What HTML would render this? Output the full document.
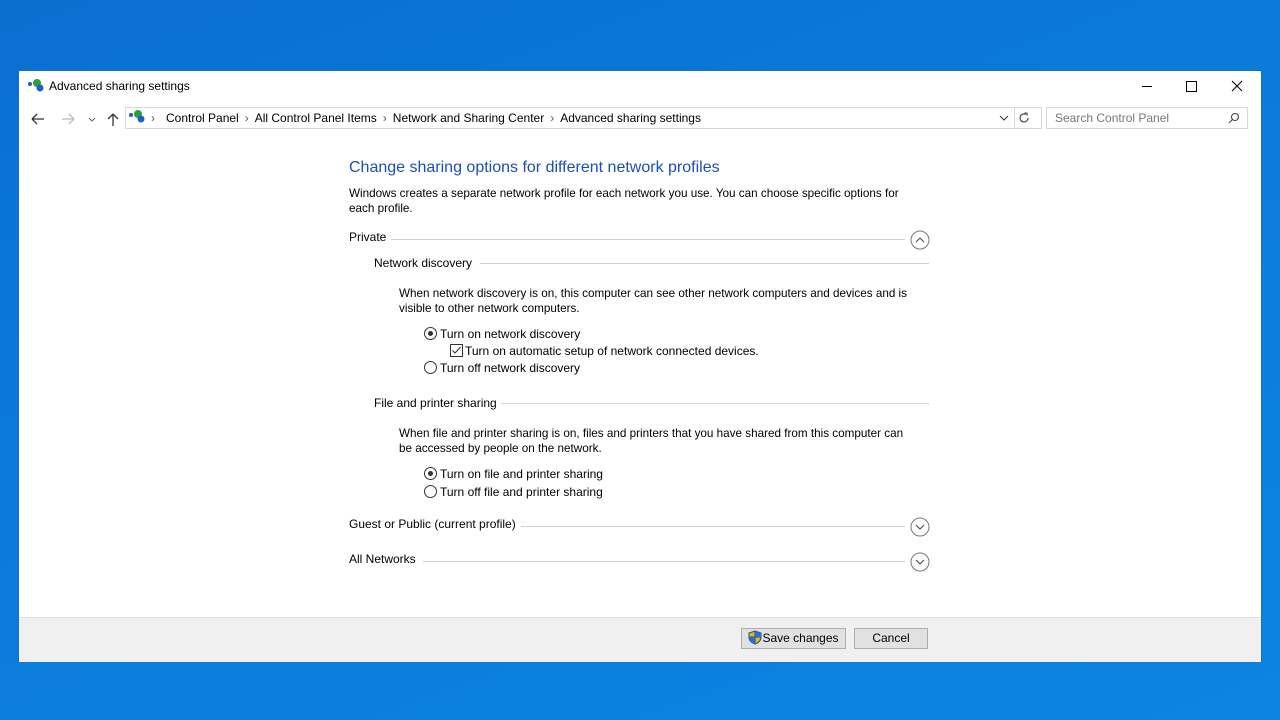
<!DOCTYPE html><html><head><style>
body{margin:0;width:1280px;height:720px;overflow:hidden;background:linear-gradient(160deg,#0a6fd0 0%,#0b7ad9 40%,#0d84e0 100%);font-family:"Liberation Sans",sans-serif;font-size:12px;color:#000;position:relative}
.win{position:absolute;left:18px;top:70px;width:1242px;height:590px;background:#fff;border:1px solid #1c6fbf}
.a{position:absolute;white-space:nowrap}
.line{position:absolute;height:1px;background:#d0d0d0}
.rad{position:absolute;width:11px;height:11px;border:1px solid #333;border-radius:50%;background:#fff}
.rad.on::after{content:"";position:absolute;left:3px;top:3px;width:5px;height:5px;border-radius:50%;background:#333}
.btn{position:absolute;height:19px;background:#e1e1e1;border:1px solid #adadad;text-align:center;line-height:19px}
.sep{color:#555;padding:0 6px}
</style></head><body>
<div class="win">
<svg class="a" style="left:8px;top:7px" width="18" height="14"><circle cx="3" cy="6" r="2" fill="#1e5fc0"/><circle cx="10" cy="5" r="4" fill="#2aa23a"/><circle cx="13" cy="10" r="3.5" fill="#1e5fc0"/></svg>
<div class="a" style="left:30px;top:8px">Advanced sharing settings</div>
<svg class="a" style="left:1122px;top:8px" width="125" height="14" stroke="#000" fill="none" stroke-width="1"><path d="M1 7.5H11"/><rect x="45.5" y="2.5" width="10" height="10"/><path d="M91 2L101 12M101 2L91 12"/></svg>
<svg class="a" style="left:10px;top:40px" width="100" height="16" fill="none" stroke-width="1.3"><path d="M3 8H15M3 8L8 3M3 8L8 13" stroke="#333"/><path d="M45 8H33M45 8L40 3M45 8L40 13" stroke="#bbb"/><path d="M60 7L63 10L66 7" stroke="#666" stroke-width="1"/><path d="M84 15V3M84 3L79 8M84 3L89 8" stroke="#333"/></svg>
<div class="a" style="left:106px;top:36px;width:915px;height:20px;border:1px solid #d9d9d9"></div>
<svg class="a" style="left:109px;top:39px" width="18" height="14"><circle cx="3" cy="5" r="2" fill="#1e5fc0"/><circle cx="10" cy="4" r="4" fill="#2aa23a"/><circle cx="13" cy="9" r="3.5" fill="#1e5fc0"/></svg>
<div class="a" style="left:132px;top:40px;color:#555">›</div>
<div class="a" style="left:147px;top:40px">Control Panel<span class="sep">›</span>All Control Panel Items<span class="sep">›</span>Network and Sharing Center<span class="sep">›</span>Advanced sharing settings</div>
<svg class="a" style="left:980px;top:43px" width="10" height="8" fill="none" stroke="#333"><path d="M1 2L5 6L9 2"/></svg>
<div class="a" style="left:995px;top:37px;width:1px;height:20px;background:#d9d9d9"></div>
<svg class="a" style="left:999px;top:41px" width="12" height="12" fill="none" stroke="#444" stroke-width="1.1"><path d="M10 6A4 4 0 1 1 8 2.5"/><path d="M6.5 1H9V3.5"/></svg>
<div class="a" style="left:1027px;top:36px;width:200px;height:20px;border:1px solid #d9d9d9"></div>
<div class="a" style="left:1036px;top:40px;color:#777">Search Control Panel</div>
<svg class="a" style="left:1209px;top:41px" width="12" height="12" fill="none" stroke="#444" stroke-width="1.1"><circle cx="7" cy="5" r="3.5"/><path d="M4.5 7.5L1 11"/></svg>
<div class="a" style="left:330px;top:88px;font-size:16px;color:#1c4fb3">Change sharing options for different network profiles</div>
<div class="a" style="left:330px;top:115px;line-height:15px;white-space:normal;width:565px;font-size:11.7px">Windows creates a separate network profile for each network you use. You can choose specific options for each profile.</div>
<div class="a" style="left:330px;top:159px">Private</div><div class="line" style="left:372px;top:168px;width:514px"></div>
<svg class="a" style="left:891px;top:159px" width="20" height="20" fill="none" stroke="#777"><circle cx="10" cy="10" r="9"/><path d="M6 12L10 8L14 12" stroke="#444"/></svg>
<div class="a" style="left:355px;top:185px">Network discovery</div><div class="line" style="left:461px;top:192px;width:449px"></div>
<div class="a" style="left:380px;top:215px;line-height:15px;white-space:normal;width:525px;font-size:11.7px">When network discovery is on, this computer can see other network computers and devices and is visible to other network computers.</div>
<div class="rad on" style="left:405px;top:256px"></div><div class="a" style="left:421px;top:256px">Turn on network discovery</div>
<svg class="a" style="left:431px;top:273px" width="13" height="13" fill="none" stroke="#333"><rect x="0.5" y="0.5" width="12" height="12"/><path d="M2.5 6.5L5 9L10.5 3"/></svg><div class="a" style="left:446px;top:273px">Turn on automatic setup of network connected devices.</div>
<div class="rad" style="left:405px;top:290px"></div><div class="a" style="left:421px;top:290px">Turn off network discovery</div>
<div class="a" style="left:355px;top:325px">File and printer sharing</div><div class="line" style="left:482px;top:332px;width:428px"></div>
<div class="a" style="left:380px;top:355px;line-height:15px;white-space:normal;width:518px;font-size:11.7px">When file and printer sharing is on, files and printers that you have shared from this computer can be accessed by people on the network.</div>
<div class="rad on" style="left:405px;top:396px"></div><div class="a" style="left:421px;top:396px">Turn on file and printer sharing</div>
<div class="rad" style="left:405px;top:414px"></div><div class="a" style="left:421px;top:414px">Turn off file and printer sharing</div>
<div class="a" style="left:330px;top:446px">Guest or Public (current profile)</div><div class="line" style="left:502px;top:455px;width:384px"></div>
<svg class="a" style="left:891px;top:446px" width="20" height="20" fill="none" stroke="#777"><circle cx="10" cy="10" r="9"/><path d="M6 8L10 12L14 8" stroke="#444"/></svg>
<div class="a" style="left:330px;top:481px">All Networks</div><div class="line" style="left:404px;top:490px;width:482px"></div>
<svg class="a" style="left:891px;top:481px" width="20" height="20" fill="none" stroke="#777"><circle cx="10" cy="10" r="9"/><path d="M6 8L10 12L14 8" stroke="#444"/></svg>
<div class="a" style="left:0;top:546px;width:1242px;height:44px;background:#f0f0f0;border-top:1px solid #dfdfdf"></div>
<div class="btn" style="left:722px;top:557px;width:103px"><svg style="vertical-align:-3px" width="14" height="15"><path d="M7 1L13 3V7C13 11 10 13 7 14C4 13 1 11 1 7V3Z" fill="#f2b400" stroke="#1d4fa0"/><path d="M7 1V14M1 7H13" stroke="#1d4fa0"/><path d="M7 1L13 3V7H7Z M1 7H7V14C4 13 1 11 1 7Z" fill="#2a6fd0"/></svg>Save changes</div>
<div class="btn" style="left:835px;top:557px;width:72px">Cancel</div>
</div>
</body></html>
